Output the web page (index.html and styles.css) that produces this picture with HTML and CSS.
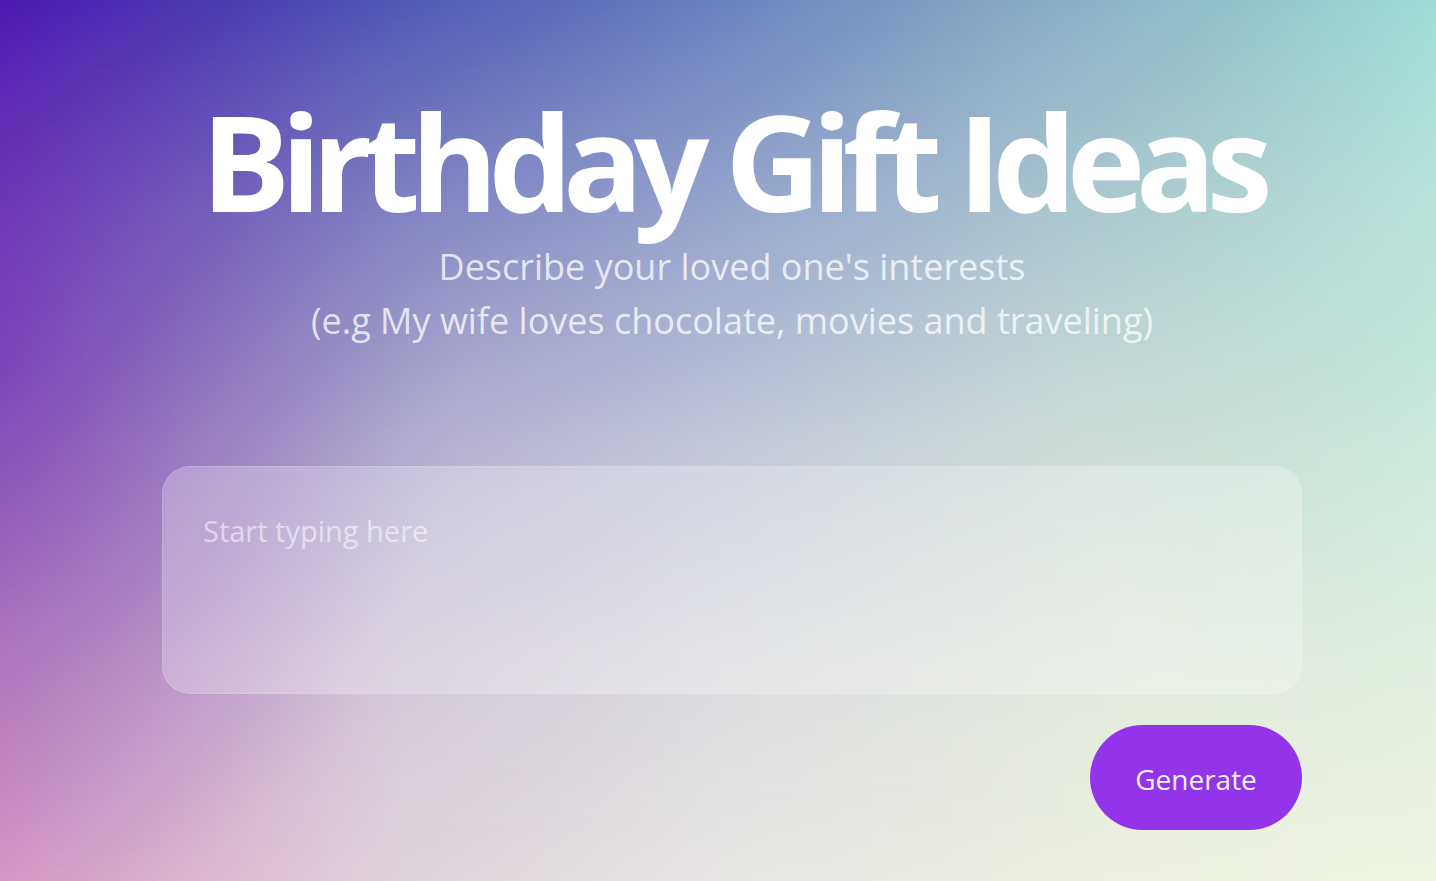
FILE: index.html
```html
<!DOCTYPE html>
<html lang="en">
<head>
<meta charset="utf-8">
<title>Birthday Gift Ideas</title>
<link rel="stylesheet" href="styles.css">
</head>
<body>
<div class="page">
  <main class="content">
    <h1 class="title">Birthday Gift Ideas</h1>
    <p class="subtitle">Describe your loved one's interests<br>(e.g My wife loves chocolate, movies and traveling)</p>
    <textarea class="prompt" placeholder="Start typing here"></textarea>
    <div class="actions">
      <button class="generate" type="button">Generate</button>
    </div>
  </main>
</div>
</body>
</html>
```
FILE: styles.css
```css
* { box-sizing: border-box; }
html, body { margin: 0; padding: 0; height: 100%; }
body {
  font-family: "Open Sans", "Noto Sans", "Liberation Sans", sans-serif;
  overflow: hidden;
}
.page {
  position: relative;
  height: 881px;
  background: linear-gradient(to right, #d99ac4 0%, #dcb8d0 14%, #e0d4dc 28%, #e8e6e4 50%, #ecf0e0 77%, #eef3e2 100%);
}
.page::before {
  content: "";
  position: absolute;
  inset: 0;
  background: linear-gradient(to right, #4a18b2 0%, #4a38b0 14%, #5058b4 28%, #6a80c0 50%, #84a8c4 70%, #90c0c8 84%, #9edcd6 100%);
  -webkit-mask-image:
    radial-gradient(ellipse 32% 62% at 0% 42%, rgba(0,0,0,.42), rgba(0,0,0,0)),
    radial-gradient(ellipse 25% 55% at 100% 40%, rgba(0,0,0,.18), rgba(0,0,0,0)),
    linear-gradient(to bottom, #000 0%, rgba(0,0,0,.63) 25%, rgba(0,0,0,.3) 50%, rgba(0,0,0,.1) 75%, rgba(0,0,0,0) 100%);
  mask-image:
    radial-gradient(ellipse 32% 62% at 0% 42%, rgba(0,0,0,.42), rgba(0,0,0,0)),
    radial-gradient(ellipse 25% 55% at 100% 40%, rgba(0,0,0,.18), rgba(0,0,0,0)),
    linear-gradient(to bottom, #000 0%, rgba(0,0,0,.63) 25%, rgba(0,0,0,.3) 50%, rgba(0,0,0,.1) 75%, rgba(0,0,0,0) 100%);
}
.content {
  position: relative;
  width: 1140px;
  margin-left: 162px;
  padding-top: 94px;
  display: flex;
  flex-direction: column;
}
.title {
  margin: 0;
  text-align: center;
  color: #fff;
  font-weight: 700;
  font-size: 133px;
  line-height: 1;
  letter-spacing: -0.072em;
}
.subtitle {
  margin: 13px 0 0;
  text-align: center;
  color: rgba(255,255,255,0.76);
  font-size: 36px;
  line-height: 54px;
}
.prompt {
  margin-top: 118px;
  width: 100%;
  height: 228px;
  resize: none;
  border: 1px solid rgba(255,255,255,0.14);
  border-radius: 28px;
  background: rgba(255,255,255,0.26);
  padding: 43px 40px 39px;
  font-family: inherit;
  font-size: 29px;
  line-height: 42px;
  color: #fff;
  outline: none;
}
.prompt::placeholder {
  color: rgba(255,255,255,0.55);
}
.actions {
  display: flex;
  justify-content: flex-end;
  margin-top: 31px;
}
.generate {
  border: none;
  border-radius: 999px;
  background: #9333ea;
  color: rgba(255,255,255,0.94);
  font-family: inherit;
  font-size: 28px;
  line-height: 42px;
  padding: 33px 0 30px;
  width: 212px;
  cursor: pointer;
}
```
